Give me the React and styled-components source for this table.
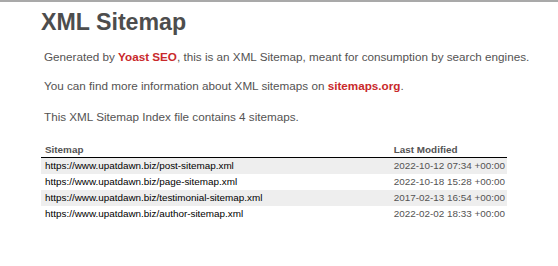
import React from "react";
import styled, { createGlobalStyle } from "styled-components";

const Global = createGlobalStyle`
  html, body { margin: 0; padding: 0; background: #fff; }
  body {
    font-family: "Liberation Sans", Arial, Helvetica, sans-serif;
    font-size: 11.7px;
    color: #545353;
  }
`;

const TopRule = styled.div`
  height: 2px;
  background: #a9a9a9;
`;

const Content = styled.div`
  padding: 0 0 0 41px;
  width: 466px;
  white-space: nowrap;
`;

const Title = styled.h1`
  margin: 7px 0 0;
  font-size: 23.2px;
  font-weight: 700;
  color: #4d4d4d;
  line-height: 27px;
`;

const Expl = styled.p`
  margin: ${(p) => p.$top || 15}px 3px ${(p) => p.$bottom || 15}px;
  line-height: 14px;
  color: #545353;
`;

const Link = styled.a`
  color: #c9292b;
  font-weight: 700;
  text-decoration: none;
`;

const Table = styled.table`
  width: 100%;
  border: none;
  border-collapse: collapse;
`;

const Th = styled.th`
  text-align: left;
  font-size: 9.9px;
  font-weight: 700;
  color: #545353;
  padding: 1px 2px 2px 4px;
  border-bottom: 1px solid #000;
  width: ${(p) => p.$w || "auto"};
`;

const Row = styled.tr`
  background: ${(p) => (p.$odd ? "#eee" : "transparent")};
`;

const Td = styled.td`
  font-size: 9.9px;
  padding: 1px 2px 1px 4px;
  line-height: 14px;
  height: 14px;
  color: #545353;
`;

const UrlLink = styled.a`
  color: #000;
  text-decoration: none;
`;

const rows = [
  ["https://www.upatdawn.biz/post-sitemap.xml", "2022-10-12 07:34 +00:00"],
  ["https://www.upatdawn.biz/page-sitemap.xml", "2022-10-18 15:28 +00:00"],
  ["https://www.upatdawn.biz/testimonial-sitemap.xml", "2017-02-13 16:54 +00:00"],
  ["https://www.upatdawn.biz/author-sitemap.xml", "2022-02-02 18:33 +00:00"],
];

export default function App() {
  return (
    <>
      <Global />
      <TopRule />
      <Content>
        <Title>XML Sitemap</Title>
        <Expl $top={14}>
          Generated by <Link href="#">Yoast SEO</Link>, this is an XML Sitemap, meant for consumption by search engines.
        </Expl>
        <Expl>
          You can find more information about XML sitemaps on <Link href="#">sitemaps.org</Link>.
        </Expl>
        <Expl $top={17} $bottom={19}>This XML Sitemap Index file contains 4 sitemaps.</Expl>
        <Table>
          <thead>
            <tr>
              <Th>Sitemap</Th>
              <Th $w="107px">Last Modified</Th>
            </tr>
          </thead>
          <tbody>
            {rows.map(([url, date], i) => (
              <Row key={url} $odd={i % 2 === 0}>
                <Td>
                  <UrlLink href="#">{url}</UrlLink>
                </Td>
                <Td>{date}</Td>
              </Row>
            ))}
          </tbody>
        </Table>
      </Content>
    </>
  );
}
